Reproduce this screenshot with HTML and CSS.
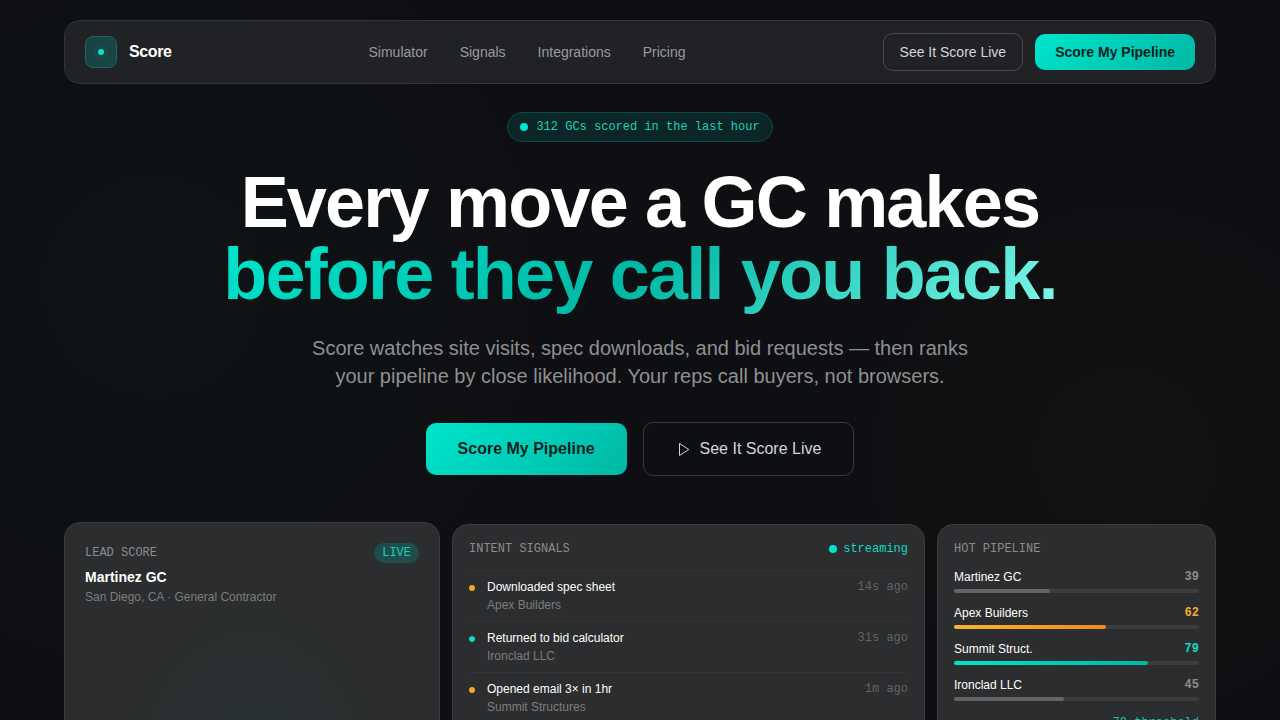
FILE: index.html
```html
<!DOCTYPE html>
<html lang="en">
<head>
    <meta charset="utf-8">
    <meta name="viewport" content="width=device-width, initial-scale=1">
    <title>Score</title>
    <link rel="stylesheet" href="styles.css">
</head>
<body>
    <div class="page">
        <header class="nav">
            <a class="brand" href="#">
                <svg class="logo" viewBox="0 0 32 32" aria-hidden="true">
                    <rect class="logo-box" x="0.5" y="0.5" width="31" height="31" rx="7.5"/>
                    <circle class="logo-ring" cx="16" cy="16" r="6"/>
                    <circle class="logo-dot" cx="16" cy="16" r="3"/>
                </svg>
                <span>Score</span>
            </a>
            <nav class="nav-links">
                <a href="#simulator">Simulator</a>
                <a href="#signals">Signals</a>
                <a href="#integrations">Integrations</a>
                <a href="#pricing">Pricing</a>
            </nav>
            <div class="nav-actions">
                <button class="btn btn-outline" type="button">See It Score Live</button>
                <button class="btn btn-primary" type="button">Score My Pipeline</button>
            </div>
        </header>

        <main>
            <section class="hero">
                <p class="pill"><span class="dot"></span>312 GCs scored in the last hour</p>
                <h1>Every move a GC makes<br><span class="gradient">before they call you back.</span></h1>
                <p class="lead">Score watches site visits, spec downloads, and bid requests — then ranks your pipeline by close likelihood. Your reps call buyers, not browsers.</p>
                <div class="hero-actions">
                    <button class="btn btn-large btn-primary" type="button">Score My Pipeline</button>
                    <button class="btn btn-large btn-outline" type="button">
                        <svg class="play" viewBox="0 0 16 16" aria-hidden="true"><path d="M3.5 2.5v12L12.8 8.5z"/></svg>
                        See It Score Live
                    </button>
                </div>
            </section>

            <section class="bento">
                <article class="card card-featured">
                    <div class="card-head">
                        <h2>LEAD SCORE</h2>
                        <span class="live">LIVE</span>
                    </div>
                    <h3>Martinez GC</h3>
                    <p class="place">San Diego, CA · General Contractor</p>
                </article>

                <article class="card card-signals" id="signals">
                    <div class="card-head">
                        <h2>INTENT SIGNALS</h2>
                        <span class="streaming"><span class="dot"></span>streaming</span>
                    </div>
                    <ul class="signals">
                        <li>
                            <span class="mark amber"></span>
                            <div><strong>Downloaded spec sheet</strong><small>Apex Builders</small></div>
                            <time>14s ago</time>
                        </li>
                        <li>
                            <span class="mark"></span>
                            <div><strong>Returned to bid calculator</strong><small>Ironclad LLC</small></div>
                            <time>31s ago</time>
                        </li>
                        <li>
                            <span class="mark amber"></span>
                            <div><strong>Opened email 3× in 1hr</strong><small>Summit Structures</small></div>
                            <time>1m ago</time>
                        </li>
                    </ul>
                </article>

                <article class="card card-pipeline">
                    <div class="card-head">
                        <h2>HOT PIPELINE</h2>
                    </div>
                    <ul class="pipeline">
                        <li class="cold">
                            <div class="row"><span>Martinez GC</span><b>39</b></div>
                            <div class="track"><div class="bar" style="width: 39%"></div></div>
                        </li>
                        <li class="warm">
                            <div class="row"><span>Apex Builders</span><b>62</b></div>
                            <div class="track"><div class="bar" style="width: 62%"></div></div>
                        </li>
                        <li class="hot">
                            <div class="row"><span>Summit Struct.</span><b>79</b></div>
                            <div class="track"><div class="bar" style="width: 79%"></div></div>
                        </li>
                        <li class="cold">
                            <div class="row"><span>Ironclad LLC</span><b>45</b></div>
                            <div class="track"><div class="bar" style="width: 45%"></div></div>
                        </li>
                    </ul>
                    <p class="threshold">70 threshold</p>
                </article>
            </section>
        </main>
    </div>
</body>
</html>
```
FILE: styles.css
```css
* {
    box-sizing: border-box;
}
body {
    margin: 0;
    background-color: #0e0f12;
    background-image:
        radial-gradient(circle at 12% 32%, rgba(0, 229, 204, 0.02), transparent 420px),
        radial-gradient(circle at 88% 460px, rgba(245, 166, 35, 0.02), transparent 280px);
    color: #fff;
    font-family: "Liberation Sans", Arial, sans-serif;
    font-size: 12px;
    line-height: 16px;
}
h1, h2, h3, p, ul {
    margin: 0;
    padding: 0;
}
ul {
    list-style: none;
}
.page {
    max-width: 1280px;
    margin: 0 auto;
    padding: 20px 64px 48px;
}

/* navigation */
.nav {
    display: flex;
    align-items: center;
    justify-content: space-between;
    height: 64px;
    padding: 0 20px;
    background-color: #202225;
    border: 1px solid #313336;
    border-radius: 16px;
}
.brand {
    display: flex;
    align-items: center;
    gap: 12px;
    color: #fff;
    font-size: 16px;
    font-weight: bold;
    line-height: 24px;
    letter-spacing: -0.025em;
    text-decoration: none;
}
.logo {
    width: 32px;
    height: 32px;
}
.logo-box {
    fill: #1a4443;
    stroke: #176a61;
}
.logo-ring {
    fill: none;
    stroke: #1c5450;
}
.logo-dot {
    fill: #00e5cc;
}
.nav-links {
    display: flex;
    gap: 32px;
}
.nav-links a {
    color: #999a9b;
    font-size: 14px;
    line-height: 20px;
    text-decoration: none;
}
.nav-actions {
    display: flex;
    align-items: center;
    gap: 12px;
}

/* buttons */
.btn {
    display: flex;
    align-items: center;
    gap: 8px;
    padding: 8px 16px;
    border: 0;
    border-radius: 10px;
    font-family: inherit;
    font-size: 14px;
    line-height: 20px;
    cursor: pointer;
}
.btn-primary {
    padding: 8px 20px;
    background: linear-gradient(135deg, #00e5cc, #00b8a5);
    color: #0e1f20;
    font-weight: bold;
}
.btn-outline {
    background: none;
    border: 1px solid #48494c;
    color: #d5d5d6;
}
.btn-large {
    padding: 14px 32px;
    font-size: 16px;
    line-height: 24px;
}
.btn-large.btn-outline {
    border-color: #38393c;
}
.play {
    width: 16px;
    height: 16px;
    fill: none;
    stroke: #d5d5d6;
    stroke-linejoin: round;
}

/* hero */
.hero {
    display: flex;
    flex-direction: column;
    align-items: center;
    padding: 28px 0 46px;
    text-align: center;
}
.pill {
    display: flex;
    align-items: center;
    gap: 8px;
    padding: 6px 12px;
    background-color: #0c2526;
    border: 1px solid #0d4b47;
    border-radius: 16px;
    color: #1fd0bc;
    font-family: "Liberation Mono", monospace;
}
.dot {
    width: 8px;
    height: 8px;
    border-radius: 50%;
    background-color: #00e5cc;
}
h1 {
    margin-top: 24px;
    font-size: 72px;
    line-height: 72px;
    letter-spacing: -0.025em;
}
.gradient {
    background: linear-gradient(135deg, #00e5cc 0%, #00b8a5 50%, #7ff8ea 100%);
    -webkit-background-clip: text;
    background-clip: text;
    color: transparent;
}
.lead {
    max-width: 672px;
    margin-top: 24px;
    color: #8f9091;
    font-size: 20px;
    line-height: 28px;
}
.hero-actions {
    display: flex;
    align-items: center;
    gap: 16px;
    margin-top: 32px;
}

/* cards */
.bento {
    display: grid;
    grid-template-columns: repeat(12, 1fr);
    align-items: end;
    gap: 12px;
}
.card {
    grid-column: span 4;
    min-height: 320px;
    padding: 16px;
    background-color: #2b2d2e;
    border: 1px solid #3a3c3d;
    border-radius: 16px;
}
.card-featured {
    min-height: 322px;
    padding: 20px;
    background-image: radial-gradient(ellipse at 50% 85%, rgba(0, 160, 180, 0.06), transparent 50%);
}
.card-signals {
    grid-column: span 5;
}
.card-pipeline {
    grid-column: span 3;
}
.card-head {
    display: flex;
    align-items: center;
    justify-content: space-between;
}
.card h2 {
    color: #8b8c8d;
    font-family: "Liberation Mono", monospace;
    font-size: 12px;
    font-weight: normal;
}
.card h3 {
    margin-top: 4px;
    font-size: 14px;
    line-height: 20px;
}
.place {
    margin-top: 2px;
    color: #7c7d7e;
}
.live {
    padding: 2px 8px;
    background-color: #1f4d4a;
    border-radius: 10px;
    color: #12d3be;
    font-family: "Liberation Mono", monospace;
}
.streaming {
    display: flex;
    align-items: center;
    gap: 6px;
    color: #12d9c4;
    font-family: "Liberation Mono", monospace;
}

.signals {
    margin-top: 13px;
}
.signals li {
    display: flex;
    gap: 12px;
    padding: 8px 0;
    border-top: 1px solid #323435;
}
.signals div {
    flex: 1;
}
.signals strong, .signals small {
    display: block;
    font-size: 12px;
    font-weight: normal;
}
.signals small {
    margin-top: 2px;
    color: #7c7d7e;
}
.signals time {
    color: #626465;
    font-family: "Liberation Mono", monospace;
}
.mark {
    width: 6px;
    height: 6px;
    margin-top: 6px;
    border-radius: 50%;
    background-color: #12d9c4;
}
.mark.amber {
    background-color: #f5a92f;
}

.pipeline {
    display: flex;
    flex-direction: column;
    gap: 12px;
    margin-top: 12px;
}
.row {
    display: flex;
    justify-content: space-between;
}
.row b {
    color: #8b8c8d;
    font-family: "Liberation Mono", monospace;
}
.track {
    height: 4px;
    margin-top: 4px;
    background-color: #3b3d3e;
    border-radius: 2px;
}
.bar {
    height: 4px;
    background-color: #636566;
    border-radius: 2px;
}
.warm b {
    color: #f5a92f;
}
.warm .bar {
    background: linear-gradient(90deg, #f9b233, #f08c1a);
}
.hot b {
    color: #12d9c4;
}
.hot .bar {
    background: linear-gradient(90deg, #00e5cc, #00b8a5);
}
.threshold {
    margin-top: 14px;
    color: #12c4b2;
    font-family: "Liberation Mono", monospace;
    text-align: right;
}
```
